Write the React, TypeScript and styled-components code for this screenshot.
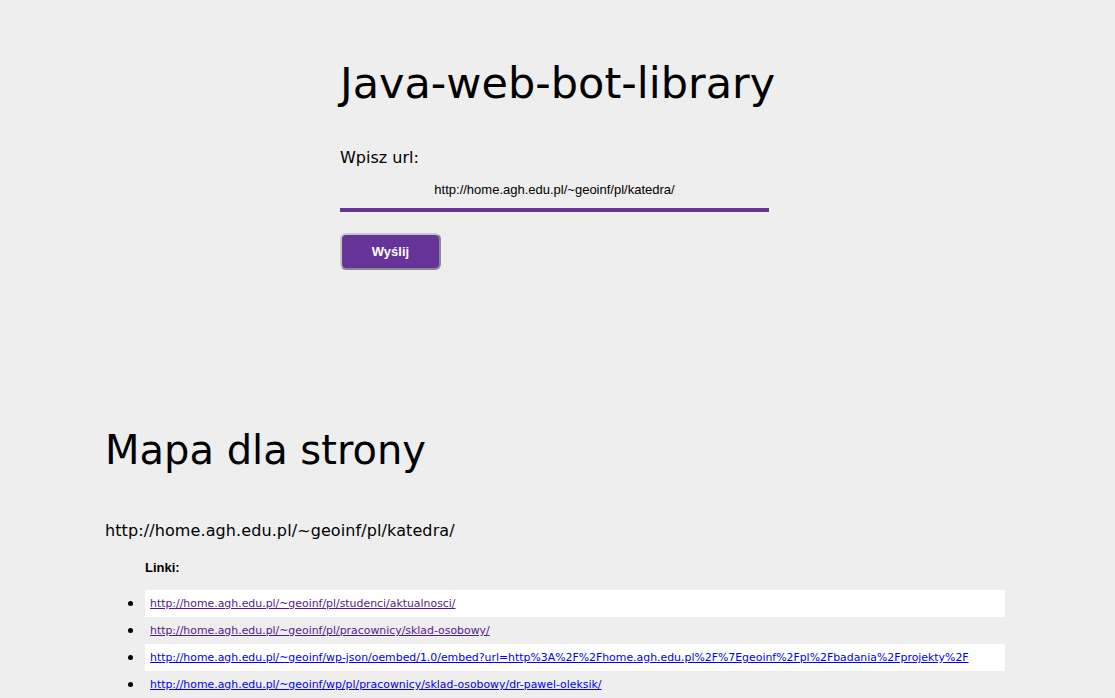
import React from "react";
import styled, { createGlobalStyle } from "styled-components";

const Global = createGlobalStyle`
  html, body { margin: 0; padding: 0; background: #eeeeee; }
  body { font-family: "DejaVu Sans", "Lucida Grande", sans-serif; color: #000; }
`;

const Page = styled.div`
  display: flex;
  flex-direction: column;
  padding-top: 57px;
`;

const FormSection = styled.section`
  width: 429px;
  margin-left: 340px;
  display: flex;
  flex-direction: column;
  align-items: flex-start;
`;

const Title = styled.h1`
  align-self: stretch;
  margin: 0;
  text-align: center;
  font-size: 43px;
  font-weight: normal;
  line-height: 52px;
  white-space: nowrap;
`;

const Label = styled.label`
  margin-top: 39px;
  font-size: 16px;
  line-height: 20px;
`;

const UrlInput = styled.input`
  margin-top: 8px;
  width: 429px;
  box-sizing: border-box;
  height: 36px;
  border: none;
  border-bottom: 4px solid #663399;
  background: transparent;
  text-align: center;
  font-family: "Liberation Sans", Arial, sans-serif;
  font-size: 13px;
  color: #000;
  padding: 0 0 6px;
  outline: none;
`;

const SubmitButton = styled.button`
  margin-top: 21px;
  width: 101px;
  height: 37px;
  background: #663399;
  color: #fff;
  border: 2px solid #8a8a8a;
  border-top-color: #c8c8c8;
  border-left-color: #c8c8c8;
  border-radius: 6px;
  font-family: "Liberation Sans", Arial, sans-serif;
  font-weight: bold;
  font-size: 13px;
  cursor: pointer;
`;

const MapSection = styled.section`
  margin-left: 105px;
  width: 900px;
  margin-top: 156px;
`;

const MapTitle = styled.h2`
  margin: 0;
  font-size: 40px;
  font-weight: normal;
  line-height: 48px;
`;

const RootUrl = styled.div`
  margin-top: 46px;
  font-size: 16px;
  letter-spacing: 0.1px;
  line-height: 22px;
`;

const LinksHeading = styled.h4`
  margin: 18px 0 0 40px;
  font-family: "Liberation Sans", Arial, sans-serif;
  font-size: 13px;
  font-weight: bold;
  line-height: 16px;
`;

const LinkList = styled.ul`
  margin: 14px 0 0;
  padding-left: 40px;
`;

const LinkItem = styled.li<{ $shaded: boolean }>`
  background: ${(p) => (p.$shaded ? "#ffffff" : "transparent")};
  height: 27px;
  line-height: 27px;
  padding-left: 5px;
  font-size: 16px;
  white-space: nowrap;
`;

const Link = styled.a<{ $visited: boolean }>`
  color: ${(p) => (p.$visited ? "#551a8b" : "#0000ee")};
  text-decoration: underline;
  font-size: 10.9px;
  vertical-align: top;
`;

const links = [
  { url: "http://home.agh.edu.pl/~geoinf/pl/studenci/aktualnosci/", visited: true },
  { url: "http://home.agh.edu.pl/~geoinf/pl/pracownicy/sklad-osobowy/", visited: true },
  {
    url: "http://home.agh.edu.pl/~geoinf/wp-json/oembed/1.0/embed?url=http%3A%2F%2Fhome.agh.edu.pl%2F%7Egeoinf%2Fpl%2Fbadania%2Fprojekty%2F",
    visited: false,
  },
  { url: "http://home.agh.edu.pl/~geoinf/wp/pl/pracownicy/sklad-osobowy/dr-pawel-oleksik/", visited: false },
];

export default function App() {
  return (
    <>
      <Global />
      <Page>
        <FormSection>
          <Title>Java-web-bot-library</Title>
          <Label htmlFor="url">Wpisz url:</Label>
          <UrlInput id="url" defaultValue="http://home.agh.edu.pl/~geoinf/pl/katedra/" />
          <SubmitButton>Wyślij</SubmitButton>
        </FormSection>
        <MapSection>
          <MapTitle>Mapa dla strony</MapTitle>
          <RootUrl>http://home.agh.edu.pl/~geoinf/pl/katedra/</RootUrl>
          <LinksHeading>Linki:</LinksHeading>
          <LinkList>
            {links.map((l, i) => (
              <LinkItem key={l.url} $shaded={i % 2 === 0}>
                <Link href="#" $visited={l.visited}>{l.url}</Link>
              </LinkItem>
            ))}
          </LinkList>
        </MapSection>
      </Page>
    </>
  );
}
